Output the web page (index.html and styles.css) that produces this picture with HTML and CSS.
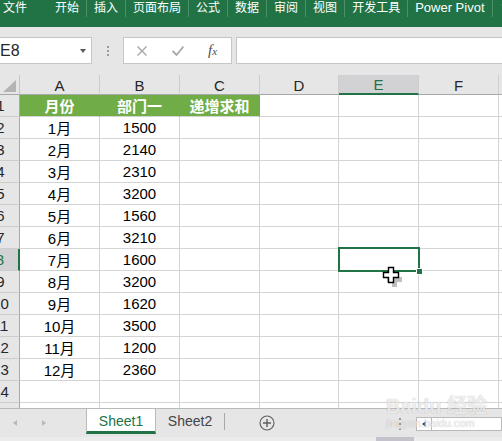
FILE: index.html
```html
<!DOCTYPE html>
<html lang="zh-CN">
<head>
    <meta charset="UTF-8">
    <title>Excel - 递增求和</title>
    <link rel="stylesheet" href="styles.css">
</head>
<body>
    <div class="ribbon">
        <span class="tab file">文件</span>
        <span class="tab first">开始</span>
        <span class="tab">插入</span>
        <span class="tab">页面布局</span>
        <span class="tab">公式</span>
        <span class="tab">数据</span>
        <span class="tab">审阅</span>
        <span class="tab">视图</span>
        <span class="tab">开发工具</span>
        <span class="tab latin">Power Pivot</span>
        <span class="tab tell">
            <svg width="10" height="12" viewBox="0 0 10 12"><circle cx="5" cy="5" r="3.5" fill="none" stroke="#fff" stroke-width="1.2"/></svg>
        </span>
    </div>

    <div class="toolbar">
        <div class="namebox">
            <span>E8</span>
            <span class="dropdown"></span>
        </div>
        <div class="grip"><i></i><i></i><i></i></div>
        <div class="fx-box">
            <svg class="fx-icon" width="12" height="12" viewBox="0 0 12 12"><path d="M1.5 1.5 L10.5 10.5 M10.5 1.5 L1.5 10.5" stroke="#a6a6a6" stroke-width="1.4"/></svg>
            <svg class="fx-icon" width="12" height="12" viewBox="0 0 12 12"><path d="M0.5 6 L4.5 10 L11.5 1.5" fill="none" stroke="#a6a6a6" stroke-width="1.8"/></svg>
            <span class="fx-label">f<small>x</small></span>
        </div>
        <div class="formula-input"></div>
    </div>

    <div class="sheet-area">
        <div class="grid">
            <div class="corner"><span class="corner-mark"></span></div>
            <div class="ch">A</div>
            <div class="ch">B</div>
            <div class="ch">C</div>
            <div class="ch">D</div>
            <div class="ch active">E</div>
            <div class="ch">F</div>
            <div class="ch"></div>

            <div class="rh">1</div>
            <div class="cell head">月份</div><div class="cell head">部门一</div><div class="cell head">递增求和</div><div class="cell"></div><div class="cell"></div><div class="cell"></div><div class="cell"></div>

            <div class="rh">2</div>
            <div class="cell">1月</div><div class="cell">1500</div><div class="cell"></div><div class="cell"></div><div class="cell"></div><div class="cell"></div><div class="cell"></div>

            <div class="rh">3</div>
            <div class="cell">2月</div><div class="cell">2140</div><div class="cell"></div><div class="cell"></div><div class="cell"></div><div class="cell"></div><div class="cell"></div>

            <div class="rh">4</div>
            <div class="cell">3月</div><div class="cell">2310</div><div class="cell"></div><div class="cell"></div><div class="cell"></div><div class="cell"></div><div class="cell"></div>

            <div class="rh">5</div>
            <div class="cell">4月</div><div class="cell">3200</div><div class="cell"></div><div class="cell"></div><div class="cell"></div><div class="cell"></div><div class="cell"></div>

            <div class="rh">6</div>
            <div class="cell">5月</div><div class="cell">1560</div><div class="cell"></div><div class="cell"></div><div class="cell"></div><div class="cell"></div><div class="cell"></div>

            <div class="rh">7</div>
            <div class="cell">6月</div><div class="cell">3210</div><div class="cell"></div><div class="cell"></div><div class="cell"></div><div class="cell"></div><div class="cell"></div>

            <div class="rh active">8</div>
            <div class="cell">7月</div><div class="cell">1600</div><div class="cell"></div><div class="cell"></div>
            <div class="cell selected">
                <svg class="cursor" width="22" height="22" viewBox="0 0 22 22">
                    <path d="M7.5 3.5 h5 v5 h5 v5 h-5 v5 h-5 v-5 h-5 v-5 h5 z" fill="#000" opacity="0.25" transform="translate(2.5 2.5)"/>
                    <path d="M6.5 1.5 h5 v5 h5 v5 h-5 v5 h-5 v-5 h-5 v-5 h5 z" fill="#fff" stroke="#000" stroke-width="1.4"/>
                </svg>
            </div>
            <div class="cell"></div><div class="cell"></div>

            <div class="rh">9</div>
            <div class="cell">8月</div><div class="cell">3200</div><div class="cell"></div><div class="cell"></div><div class="cell"></div><div class="cell"></div><div class="cell"></div>

            <div class="rh">10</div>
            <div class="cell">9月</div><div class="cell">1620</div><div class="cell"></div><div class="cell"></div><div class="cell"></div><div class="cell"></div><div class="cell"></div>

            <div class="rh">11</div>
            <div class="cell">10月</div><div class="cell">3500</div><div class="cell"></div><div class="cell"></div><div class="cell"></div><div class="cell"></div><div class="cell"></div>

            <div class="rh">12</div>
            <div class="cell">11月</div><div class="cell">1200</div><div class="cell"></div><div class="cell"></div><div class="cell"></div><div class="cell"></div><div class="cell"></div>

            <div class="rh">13</div>
            <div class="cell">12月</div><div class="cell">2360</div><div class="cell"></div><div class="cell"></div><div class="cell"></div><div class="cell"></div><div class="cell"></div>

            <div class="rh">14</div>
            <div class="cell"></div><div class="cell"></div><div class="cell"></div><div class="cell"></div><div class="cell"></div><div class="cell"></div><div class="cell"></div>

            <div class="rh">15</div>
            <div class="cell"></div><div class="cell"></div><div class="cell"></div><div class="cell"></div><div class="cell"></div><div class="cell"></div><div class="cell"></div>
        </div>
    </div>

    <div class="sheet-bar">
        <div class="tabs-row">
            <div class="nav">
                <span class="arrow left"></span>
                <span class="arrow right"></span>
            </div>
            <div class="sheet-tab current">Sheet1</div>
            <div class="sheet-tab">Sheet2</div>
            <div class="tab-sep"></div>
            <svg class="add-sheet" width="16" height="16" viewBox="0 0 16 16">
                <circle cx="8" cy="8" r="7" fill="none" stroke="#5f5f5f" stroke-width="1.1"/>
                <path d="M8 4 V12 M4 8 H12" stroke="#5f5f5f" stroke-width="1.4"/>
            </svg>
            <div class="hscroll">
                <div class="grip small"><i></i><i></i><i></i></div>
                <div class="scroll-btn"><span class="arrow-dark"></span></div>
                <div class="scroll-field"></div>
            </div>
        </div>
        <div class="track"><div class="thumb"></div></div>
    </div>

    <div class="watermark">
        <span class="wm-big">Bai&#8203;du 经验</span>
        <span class="wm-small">jingyan.baidu.com</span>
    </div>
</body>
</html>
```

FILE: styles.css
```css
body {
    margin: 0;
    width: 502px;
    height: 441px;
    overflow: hidden;
    position: relative;
    background-color: #fff;
    font-family: "Liberation Sans", "Noto Sans CJK SC", sans-serif;
}

/* ribbon tabs */
.ribbon {
    display: flex;
    align-items: flex-start;
    height: 27px;
    background-color: #217346;
    color: #fff;
    font-size: 12px;
    line-height: 16px;
    white-space: nowrap;
}

.tab {
    height: 17px;
    padding: 0 7px;
    border-left: 1px solid #4d8f69;
}

.tab.file {
    border-left: none;
    padding: 0 21px 0 3px;
}

.tab.first {
    border-left: none;
}

.tab.latin {
    font-size: 13px;
}

.tab.tell {
    padding: 0 0 0 8px;
}

/* formula bar */
.toolbar {
    display: flex;
    align-items: flex-start;
    height: 48px;
    padding-top: 10px;
    box-sizing: border-box;
    background-color: #e6e6e6;
}

.namebox {
    display: flex;
    align-items: center;
    width: 100px;
    height: 27px;
    margin-left: -8px;
    padding-left: 7px;
    box-sizing: border-box;
    background-color: #fff;
    border: 1px solid #c6c6c6;
    font-size: 16px;
    color: #262626;
}

.dropdown {
    margin-left: auto;
    margin-right: 5px;
    border-left: 3px solid transparent;
    border-right: 3px solid transparent;
    border-top: 4px solid #5a5a5a;
}

.grip {
    display: flex;
    flex-direction: column;
    align-items: center;
    gap: 2px;
    width: 31px;
    padding-top: 9px;
}

.grip i {
    display: block;
    width: 2px;
    height: 2px;
    background-color: #9a9a9a;
}

.fx-box {
    display: flex;
    align-items: center;
    gap: 24px;
    width: 109px;
    height: 27px;
    padding-left: 12px;
    box-sizing: border-box;
    background-color: #fff;
    border: 1px solid #c6c6c6;
}

.fx-label {
    font-family: "Liberation Serif", serif;
    font-style: italic;
    font-size: 15px;
    color: #505050;
    line-height: 1;
}

.fx-label small {
    font-size: 11px;
}

.formula-input {
    flex: 1;
    height: 27px;
    margin-left: 4px;
    margin-right: -4px;
    box-sizing: border-box;
    background-color: #fff;
    border: 1px solid #c6c6c6;
}

/* grid */
.sheet-area {
    height: 333px;
    overflow: hidden;
}

.grid {
    display: grid;
    grid-template-columns: 36px 80px 80px 80px 79px 80px 80px 80px;
    grid-template-rows: 20px;
    grid-auto-rows: 22px;
    margin-left: -16px;
    width: 595px;
    font-size: 15px;
    color: #000;
}

.corner,
.ch,
.rh {
    background-color: #e6e6e6;
    box-sizing: border-box;
    color: #262626;
}

.corner {
    display: flex;
    justify-content: flex-end;
    align-items: flex-end;
    padding: 0 3px 2px 0;
    border-right: 1px solid #c6c6c6;
    border-bottom: 1px solid #a8a8a8;
}

.corner-mark {
    border-left: 13px solid transparent;
    border-bottom: 12px solid #b4b4b4;
}

.ch {
    display: flex;
    align-items: center;
    justify-content: center;
    border-right: 1px solid #cdcdcd;
    border-bottom: 1px solid #a8a8a8;
    line-height: 1;
    padding-top: 1px;
}

.ch.active {
    background-color: #d2d2d4;
    color: #217346;
    border-bottom: 2px solid #217346;
}

.rh {
    display: flex;
    align-items: center;
    justify-content: center;
    padding-right: 2px;
    border-right: 1px solid #a8a8a8;
    border-bottom: 1px solid #cdcdcd;
}

.rh.active {
    background-color: #d2d2d4;
    color: #217346;
    border-right: 2px solid #217346;
}

.cell {
    display: flex;
    align-items: center;
    justify-content: center;
    box-sizing: border-box;
    border-right: 1px solid #d4d4d4;
    border-bottom: 1px solid #d4d4d4;
    white-space: nowrap;
}

.cell.head {
    background-color: #70ad47;
    border-right-color: #70ad47;
    color: #fff;
    font-weight: bold;
}

.cell.selected {
    position: relative;
    z-index: 2;
}

.cell.selected::after {
    content: "";
    position: absolute;
    top: -2px;
    left: -1px;
    right: -2px;
    bottom: -2px;
    border: 2px solid #217346;
}

.cell.selected::before {
    content: "";
    position: absolute;
    right: -5px;
    bottom: -5px;
    width: 5px;
    height: 5px;
    background-color: #217346;
    border: 1px solid #fff;
    z-index: 1;
}

.cursor {
    position: absolute;
    left: 43px;
    top: 17px;
    z-index: 3;
}

/* sheet tabs */
.sheet-bar {
    border-top: 1px solid #b9b9b9;
    background-color: #e6e6e6;
}

.tabs-row {
    display: flex;
    align-items: flex-start;
    height: 28px;
    color: #444;
}

.nav {
    display: flex;
    width: 86px;
    padding-top: 11px;
}

.arrow {
    border-top: 3px solid transparent;
    border-bottom: 3px solid transparent;
}

.arrow.left {
    margin-left: 13px;
    border-right: 4px solid #b8b8b8;
}

.arrow.right {
    margin-left: 25px;
    border-left: 4px solid #b8b8b8;
}

.sheet-tab {
    width: 68px;
    height: 25px;
    padding-top: 2px;
    box-sizing: border-box;
    text-align: center;
    font-size: 14px;
    line-height: 20px;
}

.sheet-tab.current {
    width: 70px;
    background-color: #fff;
    color: #217346;
    border-left: 1px solid #b9b9b9;
    border-right: 1px solid #b9b9b9;
    border-bottom: 3px solid #217346;
}

.tab-sep {
    width: 1px;
    height: 17px;
    margin-top: 4px;
    background-color: #a8a8a8;
}

.add-sheet {
    margin: 6px 0 0 34px;
}

.hscroll {
    display: flex;
    align-items: flex-start;
    margin-left: auto;
    margin-top: 8px;
}

.grip.small {
    width: 2px;
    padding-top: 1px;
    margin-right: 15px;
    gap: 3px;
}

.scroll-btn {
    display: flex;
    align-items: center;
    justify-content: center;
    width: 16px;
    height: 14px;
    box-sizing: border-box;
    background-color: #fff;
    border: 1px solid #b9b9b9;
}

.arrow-dark {
    border-top: 3px solid transparent;
    border-bottom: 3px solid transparent;
    border-right: 4px solid #444;
}

.scroll-field {
    width: 70px;
    height: 14px;
    box-sizing: border-box;
    background-color: #fff;
    border: 1px solid #b9b9b9;
    border-left: none;
}

.track {
    height: 4px;
    background-color: #ececec;
}

.thumb {
    width: 38px;
    height: 4px;
    margin-left: 376px;
    background-color: #c6c2cb;
}

/* watermark */
.watermark {
    position: absolute;
    left: 386px;
    top: 395px;
    display: flex;
    flex-direction: column;
    color: rgba(255, 255, 255, 0.75);
    text-shadow: 0 0 1px rgba(0, 0, 0, 0.3);
    pointer-events: none;
}

.wm-big {
    font-size: 20px;
    font-weight: bold;
    line-height: 22px;
}

.wm-small {
    font-size: 11px;
    line-height: 12px;
}
```
